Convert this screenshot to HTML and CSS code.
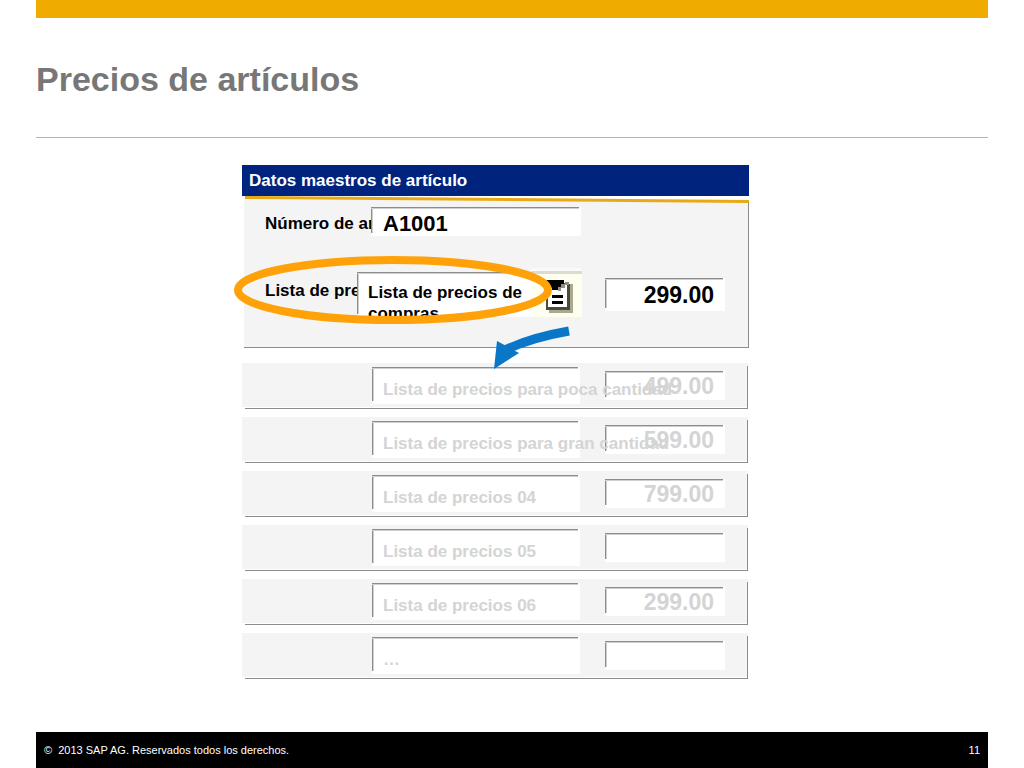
FILE: index.html
```html
<!DOCTYPE html>
<html lang="es">
<head>
    <meta charset="utf-8">
    <title>Precios de artículos</title>
    <link rel="stylesheet" href="styles.css">
</head>
<body>
    <div class="slide">
        <header class="slide-header">
            <h1>Precios de artículos</h1>
        </header>

        <main>
            <form class="master">
                <h2>Datos maestros de artículo</h2>
                <svg class="divider" viewBox="0 0 507 8" preserveAspectRatio="none" aria-hidden="true">
                    <polygon points="2,2 507,6 507,8 2,8" fill="#f4f4f4"/>
                    <polygon points="3,0 507,4 507,7 3,3" fill="#e8a917"/>
                    <rect x="506" y="7" width="1" height="1" fill="#8c8c8c"/>
                </svg>

                <div class="panel">
                    <div class="line">
                        <label for="item">Número de artículo</label>
                        <input class="field item" id="item" type="text" value="A1001">
                    </div>
                    <div class="line list-line">
                        <label for="list">Lista de precios</label>
                        <textarea class="field list" id="list">Lista de precios de compras</textarea>
                        <button class="picker" type="button" aria-label="Elegir lista de precios">
                            <svg width="51" height="49" viewBox="0 0 51 49">
                                <rect width="51" height="3" fill="#fafafa"/>
                                <rect y="3" width="51" height="3" fill="#dcdcd4"/>
                                <path d="M18 16h24v29H18z" fill="#a9a990"/>
                                <path d="M15 13h24v29H15z" fill="#4a4a3e"/>
                                <path d="M17 20h4v2h8v-3h3v-3h4v23H17z" fill="#fff"/>
                                <path d="M33 12h9v4h-6v-1h-3z" fill="#fffff0"/>
                                <path d="M15 12h18v4h-3v3h-3v3h-6v-3h-6z" fill="#000"/>
                                <path d="M27 22v-3h3v-3h4v-2h4v3h-4v3h-4v3h-3z" fill="#8f8f86"/>
                                <path d="M21 27h11v3H21zM21 33h11v3H21z" fill="#000"/>
                            </svg>
                        </button>
                        <input class="field price" type="text" value="299.00" aria-label="Precio">
                    </div>

                    <!-- marca y flecha sobre la lista elegida -->
                    <svg class="callout" width="340" height="124" viewBox="0 0 340 124" aria-hidden="true">
                        <ellipse cx="161" cy="40" rx="155" ry="30" fill="none" stroke="#ffa20a" stroke-width="8"/>
                        <path d="M337 81Q297 88 271 101" fill="none" stroke="#0a76c8" stroke-width="9"/>
                        <polygon points="265,91 287,103 262,119" fill="#0a76c8"/>
                    </svg>
                </div>

                <div class="rows">
                    <div class="row">
                        <div class="field name"><input type="text" value="Lista de precios para poca cantidad" aria-label="Lista 2"></div>
                        <input class="field price" type="text" value="499.00" aria-label="Precio 2">
                    </div>
                    <div class="row">
                        <div class="field name"><input type="text" value="Lista de precios para gran cantidad" aria-label="Lista 3"></div>
                        <input class="field price" type="text" value="599.00" aria-label="Precio 3">
                    </div>
                    <div class="row">
                        <div class="field name"><input type="text" value="Lista de precios 04" aria-label="Lista 4"></div>
                        <input class="field price" type="text" value="799.00" aria-label="Precio 4">
                    </div>
                    <div class="row">
                        <div class="field name"><input type="text" value="Lista de precios 05" aria-label="Lista 5"></div>
                        <input class="field price" type="text" value="" aria-label="Precio 5">
                    </div>
                    <div class="row">
                        <div class="field name"><input type="text" value="Lista de precios 06" aria-label="Lista 6"></div>
                        <input class="field price" type="text" value="299.00" aria-label="Precio 6">
                    </div>
                    <div class="row">
                        <div class="field name"><input type="text" value="…" aria-label="Otras listas"></div>
                        <input class="field price" type="text" value="" aria-label="Otros precios">
                    </div>
                </div>
            </form>
        </main>

        <footer>
            <span>©&nbsp; 2013 SAP AG. Reservados todos los derechos.</span>
            <span>11</span>
        </footer>
    </div>
</body>
</html>
```
FILE: styles.css
```css
* {
    box-sizing: border-box;
}
body {
    margin: 0;
    background: #fff;
    font-family: "Liberation Sans", Arial, sans-serif;
}
.slide {
    display: flex;
    flex-direction: column;
    min-height: 100vh;
    margin: 0 36px;
}
.slide-header {
    padding: 40px 0 36px;
    border-top: 18px solid #f0ab00;
    border-bottom: 1px solid #b4b4b4;
}
h1 {
    margin: 0;
    color: #777;
    font-size: 34px;
    line-height: 43px;
}
main {
    flex: 1;
    padding: 27px 0 27px 206px;
}
.master {
    max-width: 507px;
    font-size: 17px;
    font-weight: bold;
}
h2 {
    margin: 0;
    padding: 1px 7px 0;
    background: #00247d;
    color: #fff;
    font-size: 17px;
    line-height: 30px;
}
.divider {
    display: block;
    width: 100%;
    height: 8px;
}

/* panel principal */
.panel {
    position: relative;
    margin-left: 2px;
    padding: 3px 0 30px 21px;
    background: #f4f4f4;
    border-right: 1px solid #8c8c8c;
    border-bottom: 1px solid #8c8c8c;
}
.line {
    display: flex;
    align-items: flex-start;
}
.line label {
    width: 106px;
    line-height: 34px;
    white-space: nowrap;
}
.list-line {
    margin-top: 27px;
}
.list-line label {
    width: 92px;
    line-height: 46px;
}
.callout {
    position: absolute;
    left: -12px;
    top: 46px;
    pointer-events: none;
    z-index: 2;
}

/* campos con borde hundido */
.field {
    position: relative;
    flex: none;
    margin: 0;
    border: 0;
    border-radius: 0;
    background:
        linear-gradient(to bottom, #8c8c8c 50%, #cfcfcf 50%) 0 0 / calc(100% - 2px) 2px no-repeat,
        linear-gradient(to right, #8c8c8c 50%, #cfcfcf 50%) 0 0 / 2px calc(100% - 3px) no-repeat,
        #fff;
    color: #000;
    font: inherit;
}
.item {
    width: 210px;
    height: 29px;
    padding: 4px 12px 0;
    font-size: 22px;
}
.list {
    width: 174px;
    height: 45px;
    margin-top: 4px;
    padding: 10px 4px 0 11px;
    line-height: 21px;
    overflow: hidden;
    resize: none;
}
.picker {
    flex: none;
    padding: 0;
    border: 0;
    background: #fffff0;
}
.picker svg {
    display: block;
}
.price {
    width: 120px;
    height: 29px;
    padding: 2px 11px 0 0;
    font-size: 23px;
    text-align: right;
}
.list-line .price {
    height: 33px;
    margin: 10px 0 0 23px;
}

/* listas atenuadas */
.rows {
    display: flex;
    flex-direction: column;
    gap: 8px;
    margin: 15px 1px 0 0;
}
.row {
    display: flex;
    align-items: flex-start;
    gap: 25px;
    height: 46px;
    padding: 4px 0 0 130px;
    background:
        linear-gradient(#8c8c8c, #8c8c8c) 100% 100% / calc(100% - 3px) 1px no-repeat,
        linear-gradient(#8c8c8c, #8c8c8c) 100% 100% / 1px calc(100% - 3px) no-repeat,
        linear-gradient(#f4f4f4, #f4f4f4) 0 0 / 100% calc(100% - 2px) no-repeat;
}
.name {
    width: 208px;
    height: 37px;
    padding: 12px 0 0 11px;
    z-index: 1;
}
.name input {
    width: 300px;
    height: 21px;
    padding: 0;
    border: 0;
    background: transparent;
    color: #d4d4d4;
    font: inherit;
}
.row .price {
    margin-top: 4px;
    color: #d4d4d4;
}

footer {
    display: flex;
    justify-content: space-between;
    padding: 0 8px;
    background: #000;
    color: #fff;
    font-size: 11px;
    line-height: 36px;
}
```
